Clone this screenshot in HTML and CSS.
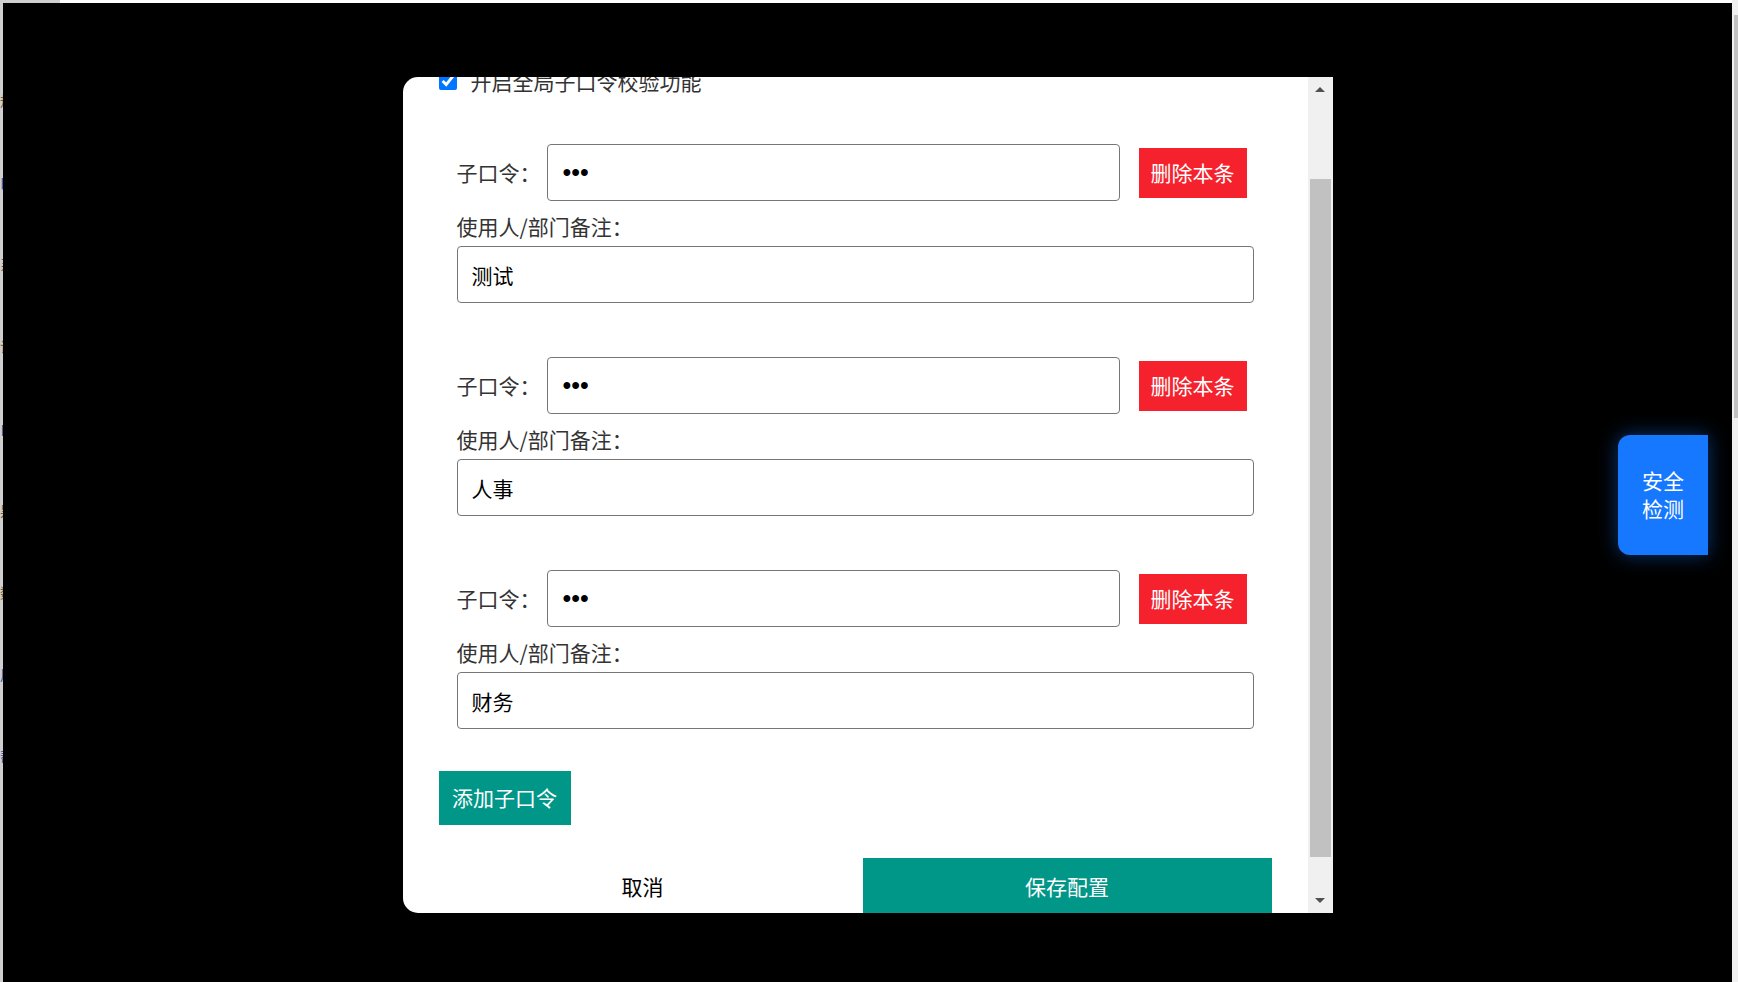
FILE: index.html
```html
<!DOCTYPE html>
<html lang="zh-CN">
<head>
    <meta charset="UTF-8">
    <meta name="viewport" content="width=device-width, initial-scale=1.0">
    <title>子口令配置</title>
    <link rel="stylesheet" href="styles.css">
</head>
<body>
    <div class="page">
        <ul class="page-menu">
            <li>规则管理</li>
            <li class="blue">口令设置</li>
            <li>系统日志</li>
            <li>访问记录</li>
            <li class="blue">白名单</li>
            <li>黑名单</li>
            <li>数据统计</li>
            <li class="blue">用户</li>
            <li class="blue">帮助</li>
        </ul>
    </div>

    <div class="page-scrollbar">
        <div class="page-thumb"></div>
    </div>

    <div class="overlay">
        <div class="modal">
            <div class="modal-body">
                <label class="global-check">
                    <input type="checkbox" checked>
                    <span>开启全局子口令校验功能</span>
                </label>

                <div class="entry">
                    <div class="pwd-row">
                        <span class="label">子口令：</span>
                        <input type="password" class="field pwd-field" value="abc">
                        <button class="delete-btn">删除本条</button>
                    </div>
                    <div class="remark-label">使用人/部门备注：</div>
                    <input type="text" class="field remark-field" value="测试">
                </div>

                <div class="entry">
                    <div class="pwd-row">
                        <span class="label">子口令：</span>
                        <input type="password" class="field pwd-field" value="abc">
                        <button class="delete-btn">删除本条</button>
                    </div>
                    <div class="remark-label">使用人/部门备注：</div>
                    <input type="text" class="field remark-field" value="人事">
                </div>

                <div class="entry">
                    <div class="pwd-row">
                        <span class="label">子口令：</span>
                        <input type="password" class="field pwd-field" value="abc">
                        <button class="delete-btn">删除本条</button>
                    </div>
                    <div class="remark-label">使用人/部门备注：</div>
                    <input type="text" class="field remark-field" value="财务">
                </div>

                <button class="add-btn">添加子口令</button>

                <div class="modal-footer">
                    <button class="cancel-btn">取消</button>
                    <button class="save-btn">保存配置</button>
                </div>
            </div>

            <div class="modal-scrollbar">
                <div class="scroll-btn"><span class="arrow-up"></span></div>
                <div class="scroll-track">
                    <div class="scroll-thumb"></div>
                </div>
                <div class="scroll-btn"><span class="arrow-down"></span></div>
            </div>
        </div>
    </div>

    <button class="check-btn">安全<br>检测</button>
</body>
</html>
```

FILE: styles.css
```css
* {
    box-sizing: border-box;
}

body {
    margin: 0;
    font-family: "Noto Sans CJK SC", "Noto Sans", sans-serif;
    background: #ffffff;
    color: #333333;
    height: 100vh;
    overflow: hidden;
}

/* page behind the mask */
.page {
    height: 100vh;
    width: 60px;
    background: #cfcfcf;
    padding-top: 90px;
}

.page-menu {
    list-style: none;
    margin: 0;
    padding: 0;
    font-size: 14px;
    color: #7a5a30;
}

.page-menu li {
    margin-bottom: 62px;
    white-space: nowrap;
}

.page-menu .blue {
    color: #2a4fa0;
}

.page-scrollbar {
    position: fixed;
    top: 0;
    right: 0;
    width: 6px;
    height: 100vh;
    background: #f0f0f0;
    padding: 15px 0 0 2px;
}

.page-thumb {
    height: 403px;
    background: #c1c1c1;
}

.overlay {
    position: fixed;
    top: 3px;
    left: 3px;
    right: 6px;
    bottom: 0;
    background: #000000;
    display: flex;
    justify-content: center;
    align-items: center;
}

/* dialog */
.modal {
    width: 930px;
    height: 836px;
    margin-top: 5px;
    background: #ffffff;
    border-radius: 15px 0 0 15px;
    display: flex;
    overflow: hidden;
}

.modal-body {
    flex: 1;
    overflow: hidden;
    font-size: 21px;
}

.global-check {
    display: flex;
    align-items: center;
    gap: 14px;
    height: 28px;
    margin: -10px 0 0 36px;
    color: #333333;
}

.global-check input {
    width: 18px;
    height: 18px;
    margin: 0;
}

.entry {
    margin: 54px 0 0 54px;
}

.global-check + .entry {
    margin-top: 49px;
}

.pwd-row {
    display: flex;
    align-items: center;
}

.label {
    width: 90px;
    line-height: 28px;
    margin-top: -2px;
}

.field {
    height: 57px;
    border: 1px solid #767676;
    border-radius: 4px;
    padding: 0 14px;
    font-family: inherit;
    font-size: 21px;
    color: #000000;
    outline: none;
}

.pwd-field {
    width: 573px;
    padding-left: 15px;
    font-family: "Liberation Sans", Arial, sans-serif;
    font-size: 25px;
}

.remark-field {
    width: 797px;
    display: block;
}

.delete-btn {
    margin-left: 19px;
    width: 108px;
    height: 50px;
    border: none;
    background: #f5222d;
    color: #ffffff;
    font-family: inherit;
    font-size: 21px;
    padding: 0 0 2px;
    cursor: pointer;
}

.remark-label {
    margin: 11px 0 6px;
    line-height: 28px;
}

.add-btn {
    display: block;
    margin: 42px 0 0 36px;
    width: 132px;
    height: 54px;
    border: none;
    background: #009688;
    color: #ffffff;
    font-family: inherit;
    font-size: 21px;
    padding: 0 0 2px;
    cursor: pointer;
}

.modal-footer {
    display: flex;
    margin: 33px 0 0 20px;
}

.cancel-btn,
.save-btn {
    height: 55px;
    border: none;
    font-family: inherit;
    font-size: 21px;
    padding: 0;
    cursor: pointer;
}

.cancel-btn {
    width: 440px;
    background: #ffffff;
    color: #000000;
}

.save-btn {
    width: 409px;
    background: #009688;
    color: #ffffff;
}

/* dialog scrollbar */
.modal-scrollbar {
    width: 25px;
    background: #f0f0f0;
    display: flex;
    flex-direction: column;
}

.scroll-btn {
    height: 25px;
    display: flex;
    justify-content: center;
    align-items: center;
}

.arrow-up {
    border-left: 5px solid transparent;
    border-right: 5px solid transparent;
    border-bottom: 5px solid #505050;
}

.arrow-down {
    border-left: 5px solid transparent;
    border-right: 5px solid transparent;
    border-top: 5px solid #505050;
}

.scroll-track {
    flex: 1;
    padding: 77px 2px 31px;
    display: flex;
}

.scroll-thumb {
    flex: 1;
    background: #c1c1c1;
}

/* floating button */
.check-btn {
    position: fixed;
    top: 435px;
    right: 30px;
    width: 90px;
    height: 120px;
    border: none;
    border-radius: 12px 0 0 12px;
    background: #1677ff;
    color: #ffffff;
    font-family: "Noto Sans CJK SC", "Noto Sans", sans-serif;
    font-size: 21px;
    line-height: 28px;
    padding: 0 0 2px;
    box-shadow: 0 0 20px rgba(22, 119, 255, 0.45);
    cursor: pointer;
}
```
